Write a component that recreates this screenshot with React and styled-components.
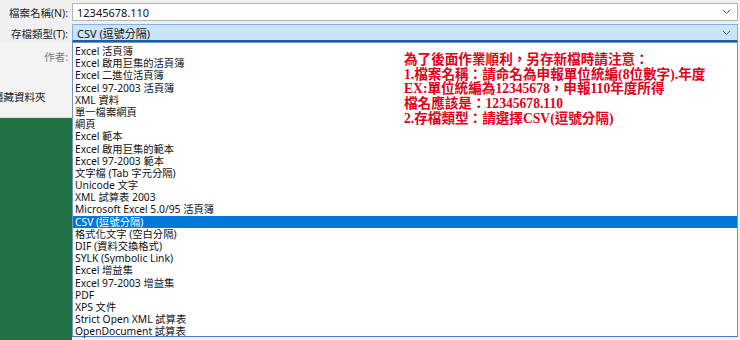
import React from 'react';
import styled, { createGlobalStyle } from 'styled-components';

const GlobalStyle = createGlobalStyle`
    html, body {
        margin: 0;
        padding: 0;
        background: #f0f0f0;
    }
    body {
        font-family: "Noto Sans", "Noto Sans CJK TC", sans-serif;
    }
`;

const Window = styled.div`
    position: relative;
    width: 740px;
    height: 340px;
    overflow: hidden;
    background: #f0f0f0;
    display: flex;
    flex-direction: column;
`;

const Fields = styled.div`
    display: flex;
    flex-direction: column;
    gap: 3px;
    padding: 3px 2px 0 0;
`;

const FieldRow = styled.div`
    display: grid;
    grid-template-columns: 72px 1fr;
    align-items: center;
`;

const Label = styled.span`
    font-size: 10.5px;
    color: #1e1e1e;
    text-align: right;
    padding-right: 4px;
    white-space: nowrap;
`;

const Combo = styled.div`
    height: 18px;
    box-sizing: border-box;
    display: flex;
    align-items: center;
    justify-content: space-between;
    padding: 0 6px 0 4px;
    font-size: 11px;
    color: #111;
    background: ${p => (p.$active ? '#cce4f7' : '#ffffff')};
    border: 1px solid ${p => (p.$active ? '#7eb4ea' : '#b4b4b4')};
    border-bottom: ${p => (p.$active ? '2px solid #1a5ea8' : '1px solid #b4b4b4')};
`;

const Body = styled.div`
    flex: 1;
    display: grid;
    grid-template-columns: 72px 1fr;
`;

const Sidebar = styled.div`
    display: flex;
    flex-direction: column;
`;

const SideTop = styled.div`
    height: 76px;
    background: #f3f3f3;
    display: flex;
    flex-direction: column;
    padding-top: 7px;
    box-sizing: border-box;
    border-bottom: 1px solid #d9d9d9;
`;

const Muted = styled.span`
    font-size: 10.5px;
    color: #7a7a7a;
    text-align: right;
    padding-right: 4px;
`;

const Folder = styled.span`
    margin-top: 25px;
    margin-left: -7px;
    font-size: 10.5px;
    color: #222;
    white-space: nowrap;
    overflow: hidden;
`;

const Green = styled.div`
    flex: 1;
    background: #217346;
`;

const List = styled.ul`
    position: absolute;
    left: 72px;
    top: 42px;
    right: 2px;
    bottom: 3px;
    margin: 0;
    padding: 2px 0 0;
    list-style: none;
    background: #ffffff;
    border: 1px solid #6f95bf;
    border-bottom-color: #3f7fc0;
`;

const Item = styled.li`
    height: 12.2px;
    line-height: 12.2px;
    padding-left: 2px;
    font-size: 10.3px;
    white-space: nowrap;
    overflow: hidden;
    color: ${p => (p.$selected ? '#ffffff' : '#111111')};
    background: ${p => (p.$selected ? '#0078d7' : 'transparent')};
`;

const Note = styled.div`
    position: absolute;
    left: 404px;
    top: 53px;
    font-family: "Liberation Serif", "Noto Sans CJK TC", serif;
    font-weight: bold;
    font-size: 13.6px;
    line-height: 14.7px;
    color: #e2001a;
    white-space: nowrap;
`;

const Chevron = () => (
    <svg width="9" height="6" viewBox="0 0 9 6">
        <path d="M1 1 L4.5 4.5 L8 1" fill="none" stroke="#555" strokeWidth="1" />
    </svg>
);

const types = [
    'Excel 活頁簿',
    'Excel 啟用巨集的活頁簿',
    'Excel 二進位活頁簿',
    'Excel 97-2003 活頁簿',
    'XML 資料',
    '單一檔案網頁',
    '網頁',
    'Excel 範本',
    'Excel 啟用巨集的範本',
    'Excel 97-2003 範本',
    '文字檔 (Tab 字元分隔)',
    'Unicode 文字',
    'XML 試算表 2003',
    'Microsoft Excel 5.0/95 活頁簿',
    'CSV (逗號分隔)',
    '格式化文字 (空白分隔)',
    'DIF (資料交換格式)',
    'SYLK (Symbolic Link)',
    'Excel 增益集',
    'Excel 97-2003 增益集',
    'PDF',
    'XPS 文件',
    'Strict Open XML 試算表',
    'OpenDocument 試算表',
];

const noteLines = [
    '為了後面作業順利，另存新檔時請注意：',
    '1.檔案名稱：請命名為申報單位統編(8位數字).年度',
    'EX:單位統編為12345678，申報110年度所得',
    '檔名應該是：12345678.110',
    '2.存檔類型：請選擇CSV(逗號分隔)',
];

const App = () => (
    <Window>
        <GlobalStyle />
        <Fields>
            <FieldRow>
                <Label>檔案名稱(N):</Label>
                <Combo>
                    <span>12345678.110</span>
                    <Chevron />
                </Combo>
            </FieldRow>
            <FieldRow>
                <Label>存檔類型(T):</Label>
                <Combo $active>
                    <span>CSV (逗號分隔)</span>
                    <Chevron />
                </Combo>
            </FieldRow>
        </Fields>
        <Body>
            <Sidebar>
                <SideTop>
                    <Muted>作者:</Muted>
                    <Folder>隱藏資料夾</Folder>
                </SideTop>
                <Green />
            </Sidebar>
        </Body>
        <List>
            {types.map(t => (
                <Item key={t} $selected={t === 'CSV (逗號分隔)'}>{t}</Item>
            ))}
        </List>
        <Note>
            {noteLines.map(l => <div key={l}>{l}</div>)}
        </Note>
    </Window>
);

export default App;
